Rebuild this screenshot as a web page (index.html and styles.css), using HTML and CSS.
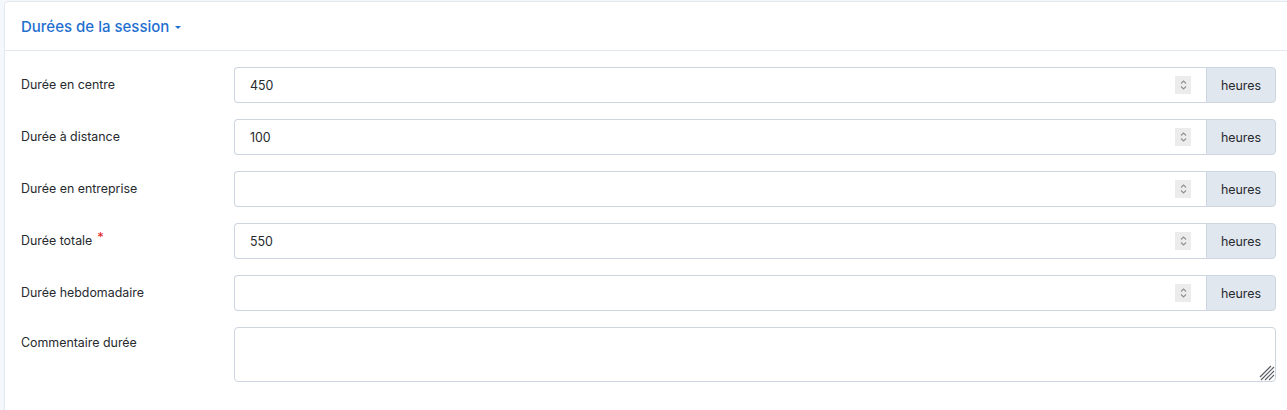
FILE: index.html
```html
<!DOCTYPE html>
<html lang="fr">
<head>
<meta charset="utf-8">
<title>Durées de la session</title>
<link rel="stylesheet" href="styles.css">
</head>
<body>
<div class="card">
  <div class="card-header">
    <span class="title">Durées de la session</span>
    <span class="caret"></span>
  </div>
  <div class="card-body">
    <div class="row">
      <label class="lbl">Durée en centre</label>
      <div class="group"><div class="field"><input class="ctl" type="number" value="450"><span class="spin"><svg viewBox="0 0 15 18" width="15" height="18"><path d="M5 7.5 L7.5 5 L10 7.5 M5 10.5 L7.5 13 L10 10.5" fill="none" stroke="#8e9296" stroke-width="1.1"/></svg></span></div><span class="addon">heures</span></div>
    </div>
    <div class="row">
      <label class="lbl">Durée à distance</label>
      <div class="group"><div class="field"><input class="ctl" type="number" value="100"><span class="spin"><svg viewBox="0 0 15 18" width="15" height="18"><path d="M5 7.5 L7.5 5 L10 7.5 M5 10.5 L7.5 13 L10 10.5" fill="none" stroke="#8e9296" stroke-width="1.1"/></svg></span></div><span class="addon">heures</span></div>
    </div>
    <div class="row">
      <label class="lbl">Durée en entreprise</label>
      <div class="group"><div class="field"><input class="ctl" type="number" value=""><span class="spin"><svg viewBox="0 0 15 18" width="15" height="18"><path d="M5 7.5 L7.5 5 L10 7.5 M5 10.5 L7.5 13 L10 10.5" fill="none" stroke="#8e9296" stroke-width="1.1"/></svg></span></div><span class="addon">heures</span></div>
    </div>
    <div class="row">
      <label class="lbl">Durée totale<span class="req">*</span></label>
      <div class="group"><div class="field"><input class="ctl" type="number" value="550"><span class="spin"><svg viewBox="0 0 15 18" width="15" height="18"><path d="M5 7.5 L7.5 5 L10 7.5 M5 10.5 L7.5 13 L10 10.5" fill="none" stroke="#8e9296" stroke-width="1.1"/></svg></span></div><span class="addon">heures</span></div>
    </div>
    <div class="row">
      <label class="lbl">Durée hebdomadaire</label>
      <div class="group"><div class="field"><input class="ctl" type="number" value=""><span class="spin"><svg viewBox="0 0 15 18" width="15" height="18"><path d="M5 7.5 L7.5 5 L10 7.5 M5 10.5 L7.5 13 L10 10.5" fill="none" stroke="#8e9296" stroke-width="1.1"/></svg></span></div><span class="addon">heures</span></div>
    </div>
    <div class="row">
      <label class="lbl">Commentaire durée</label>
      <div class="area-wrap">
        <textarea class="area"></textarea>
        <svg class="grip" viewBox="0 0 18 18" width="18" height="18"><path d="M17 4 L4 17 M17 8 L8 17 M17 12 L12 17 M14 3 L3 14" fill="none" stroke="#5c5f63" stroke-width="1.2"/></svg>
      </div>
    </div>
  </div>
</div>
</body>
</html>
```

FILE: styles.css
```css
* { box-sizing: border-box; }
html, body { margin: 0; padding: 0; }
body {
  background: #f4f7fb;
  font-family: Inter, "Noto Sans", sans-serif;
  font-size: 12.4px;
  color: #26292d;
  overflow: hidden;
  padding-top: 1px;
  padding-left: 4px;
}
.card {
  background: #fff;
  border: 1px solid #e2e8ef;
  border-radius: 4px 0 0 0;
  margin-right: -6px;
  height: 420px;
}
.card-header {
  height: 49px;
  border-bottom: 1px solid #e2e8ef;
  display: flex;
  align-items: center;
  padding-left: 16px;
  gap: 6px;
}
.title {
  color: #1f6fcf;
  font-size: 15px;
  font-weight: 500;
}
.caret {
  width: 0; height: 0;
  border-left: 3px solid transparent;
  border-right: 3px solid transparent;
  border-top: 3px solid #1f6fcf;
  margin-top: 2px;
}
.card-body {
  padding: 16px 16px 0 16px;
  display: flex;
  flex-direction: column;
  gap: 16px;
}
.row {
  display: grid;
  grid-template-columns: 213px 1fr;
  align-items: start;
}
.lbl {
  height: 36px;
  line-height: 36px;
  color: #26292d;
}
.row:last-child .lbl { height: 32px; line-height: 32px; }
.req {
  display: inline-block;
  color: #e0241b;
  font-size: 13px;
  position: relative;
  top: -3px;
  line-height: 0;
  margin-left: 5px;
}
.group {
  display: flex;
  height: 36px;
}
.field {
  flex: 1;
  min-width: 0;
  position: relative;
}
.ctl {
  width: 100%;
  height: 36px;
  border: 1px solid #cdd6e0;
  border-right: none;
  border-radius: 4px 0 0 4px;
  padding: 0 40px 0 15px;
  font-family: inherit;
  font-size: 12.4px;
  color: #26292d;
  background: #fff;
  outline: none;
  -moz-appearance: textfield;
}
.ctl::-webkit-inner-spin-button,
.ctl::-webkit-outer-spin-button { -webkit-appearance: none; margin: 0; }
.spin {
  position: absolute;
  right: 15px;
  top: 9px;
  width: 16px;
  height: 18px;
  background: #ececec;
  display: flex;
  justify-content: center;
}
.spin svg { display: block; }
.addon {
  width: 70px;
  display: flex;
  align-items: center;
  justify-content: center;
  background: #e1e7ef;
  border: 1px solid #cdd6e0;
  border-radius: 0 4px 4px 0;
  color: #26292d;
}
.area-wrap { position: relative; }
.area {
  display: block;
  width: 100%;
  height: 55px;
  border: 1px solid #cdd6e0;
  border-radius: 4px;
  font-family: inherit;
  font-size: 12.4px;
  padding: 8px 15px;
  resize: none;
  outline: none;
}
.grip {
  position: absolute;
  right: 1px;
  bottom: 1px;
}
```
